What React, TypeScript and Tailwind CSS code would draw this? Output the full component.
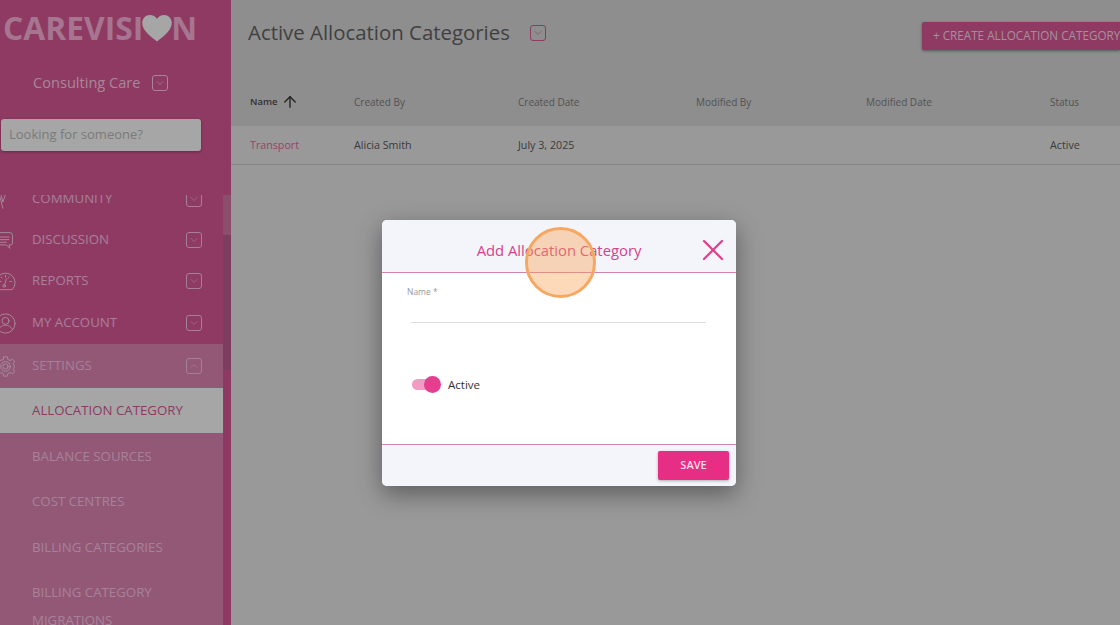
import { ArrowUp, ChevronDown, ChevronUp, X } from "lucide-react";
import type { ReactNode } from "react";

const font = "font-['Open_Sans',sans-serif]";

function ChevronBox({ up, className }: { up?: boolean; className: string }) {
  return (
    <span className={`flex size-4 shrink-0 items-center justify-center rounded-[3px] border ${className}`}>
      {up ? <ChevronUp size={12} strokeWidth={1.25} /> : <ChevronDown size={12} strokeWidth={1.25} />}
    </span>
  );
}

function NavRow({ icon, label, up, className }: { icon: ReactNode; label: string; up?: boolean; className: string }) {
  return (
    <div className={`flex items-center pr-[21px] ${className}`}>
      <span className="flex w-8 shrink-0 -translate-x-[5px] items-center text-[#ffe0f0]">{icon}</span>
      <span className="flex-1 text-[13.250px] text-[#ffc4ea]">{label}</span>
      <ChevronBox up={up} className="border-[#ffc4ea] text-[#ffc4ea]" />
    </div>
  );
}

const iconProps = {
  width: 21,
  height: 21,
  viewBox: "0 0 24 24",
  fill: "none",
  stroke: "currentColor",
  strokeWidth: 1,
  strokeLinecap: "round" as const,
  strokeLinejoin: "round" as const,
};

function CommunityIcon() {
  return (
    <svg {...iconProps}>
      <path d="M1 4h20l-9 2-3 9-2-8z" />
      <path d="M6 10l3 12" />
    </svg>
  );
}

function DiscussionIcon() {
  return (
    <svg {...iconProps}>
      <path d="M3 3h14a3 3 0 0 1 3 3v9a2 2 0 0 1-2 2h-2l1 4-4-4H3a3 3 0 0 1-3-3V6a3 3 0 0 1 3-3z" />
      <path d="M3 8h13M3 11h13M3 14h10" />
    </svg>
  );
}

function ReportsIcon() {
  return (
    <svg {...iconProps}>
      <path d="M4 21a11 11 0 1 1 16 0z" />
      <path d="M12 5v2M5 12h2M17 12h2M7 7l1 1M16 7l-1 1" />
      <path d="M13 9l-2 7" />
      <circle cx="10.5" cy="17" r="1.5" />
    </svg>
  );
}

function AccountIcon() {
  return (
    <svg {...iconProps}>
      <circle cx="12" cy="12" r="11" />
      <circle cx="12" cy="9" r="4" />
      <path d="M4 19c2-4 5-5 8-5s6 1 8 5" />
    </svg>
  );
}

function SettingsIcon() {
  return (
    <svg {...iconProps}>
      <path d="M10 1h4l.7 3 2.6 1.1L20 3.6 22.4 6l-1.5 2.7L22 11v2l-1.100 2.300 1.500 2.700L20 20.400l-2.700-1.500-2.600 1.100-.7 3h-4l-.7-3-2.600-1.100L4 20.400 1.600 18l1.500-2.700L2 13v-2l1.100-2.300L1.600 6 4 3.600l2.700 1.500L9.300 4z" />
      <circle cx="12" cy="12" r="5.500" />
      <circle cx="12" cy="12" r="3" />
    </svg>
  );
}

const subItems = ["BALANCE SOURCES", "COST CENTRES", "BILLING CATEGORIES"];

function Sidebar() {
  return (
    <aside className="flex h-full w-[231px] shrink-0 flex-col overflow-hidden bg-[#dc5998] shadow-[2px_0_6px_rgba(0,0,0,0.35)]">
      <div className="flex h-[56px] shrink-0 items-center pl-[3px] text-[31.800px] font-bold leading-none text-[#ffb4de]">
        <span>CAREVISI</span>
        <svg width="30" height="27" viewBox="0 0 24 22" className="-mx-px shrink-0 text-white">
          <path fill="currentColor" d="M12 21.500C5 16 0 12 0 6.500 0 2.800 2.800 0 6.300 0 8.600 0 10.800 1.200 12 3.200 13.200 1.200 15.400 0 17.700 0 21.200 0 24 2.800 24 6.500 24 12 19 16 12 21.500z" />
        </svg>
        <span>N</span>
      </div>

      <div className="mt-[17px] flex h-5 items-center gap-[11px] pl-[33px] text-[14.600px] text-[#ffd0ea]">
        <span>Consulting Care</span>
        <ChevronBox className="border-[#ffd0ea] text-[#ffd0ea]" />
      </div>

      <div className="ml-px mt-[26px] flex h-8 w-[200px] shrink-0 items-center rounded-[3px] bg-white pl-2 text-[13px] text-[#bdbdbd] shadow-[0_1px_3px_rgba(0,0,0,0.3)]">
        Looking for someone?
      </div>

      <div className="relative mt-[44px] min-h-0 flex-1">
        <div className="h-full w-[223px] overflow-hidden">
          <NavRow icon={<CommunityIcon />} label="COMMUNITY" className="-mt-[6px] h-[20px]" />
          <NavRow icon={<DiscussionIcon />} label="DISCUSSION" className="mt-[21px] h-[20px]" />
          <NavRow icon={<ReportsIcon />} label="REPORTS" className="mt-[21px] h-[20px]" />
          <NavRow icon={<AccountIcon />} label="MY ACCOUNT" className="mt-[22px] h-[20px]" />
          <NavRow icon={<SettingsIcon />} label="SETTINGS" up className="mt-[11px] h-[44px] bg-[#e287b5]" />
          <div className="bg-[#e287b5] pb-10">
            <div className="flex h-[45px] items-center bg-white pl-8 text-[13.250px] text-[#dc5998]">ALLOCATION CATEGORY</div>
            {subItems.map((item) => (
              <div key={item} className="flex h-[45.500px] items-center pl-8 pt-[2px] text-[13.250px] text-[#ffc8ea]">
                {item}
              </div>
            ))}
            <div className="pl-8 pt-[8px] text-[13.250px] leading-[28px] text-[#ffc8ea]">
              BILLING CATEGORY
              <br />
              MIGRATIONS
            </div>
          </div>
        </div>
        <div className="absolute right-0 top-0 h-[175px] w-2 bg-[#c05f92]">
          <div className="h-10 bg-[#d678a8]" />
        </div>
      </div>
    </aside>
  );
}

const columns = ["Created By", "Created Date", "Modified By", "Modified Date", "Status"];
const grid = "grid grid-cols-[104px_164px_178px_170px_184px_1fr] pl-[19px]";

function Main() {
  return (
    <main className="flex min-w-0 flex-1 flex-col bg-[#ebebeb]">
      <div className="h-[126px] shrink-0 overflow-hidden bg-[#dadada]">
        <div className="flex h-[80px] items-start pl-[17px]">
          <h1 className="mt-[17px] text-[20.400px] leading-[30px] text-[#646464]">Active Allocation Categories</h1>
          <ChevronBox className="ml-5 mt-[25px] border-[#dc5998] text-[#dc5998]" />
          <button className="ml-auto mt-[22px] flex h-[28px] w-[198px] shrink-0 items-center overflow-hidden whitespace-nowrap rounded-l-[2px] bg-[#dc5998] pl-[11px] text-[11.700px] text-[#ffdcf0] shadow-[0_1px_3px_rgba(0,0,0,0.4)]">
            + CREATE ALLOCATION CATEGORY
          </button>
        </div>
        <div className={`${grid} h-[44px] items-center text-[10px] font-medium text-[#808080]`}>
          <span className="flex items-center gap-[3px] text-[9.500px] font-semibold text-[#4d4d4d]">
            Name <ArrowUp size={18} strokeWidth={1.75} className="text-[#333]" />
          </span>
          {columns.map((c) => (
            <span key={c}>{c}</span>
          ))}
        </div>
      </div>
      <div className={`${grid} h-[39px] items-center border-b border-[#d0d0d0] text-[10.700px] text-[#5c5c5c]`}>
        <span className="text-[#e66ba1]">Transport</span>
        <span>Alicia Smith</span>
        <span>July 3, 2025</span>
        <span />
        <span />
        <span>Active</span>
      </div>
    </main>
  );
}

function Modal() {
  return (
    <div className="relative flex h-[266px] w-[354px] flex-col overflow-hidden rounded-[5px] bg-white shadow-[0_8px_24px_rgba(0,0,0,0.4)]">
      <div className="relative flex h-[53px] shrink-0 items-center justify-center border-b border-[#cf85b0] bg-[#f4f5fa] pt-[8px] text-[14.800px] text-[#d6418c]">
        Add Allocation Category
        <X size={36} strokeWidth={1.5} className="absolute right-[5px] top-[12px] text-[#e0408a]" />
      </div>
      <div className="flex-1 px-[25px] pt-[13px]">
        <div className="text-[8.500px] leading-3 text-[#9a9a9a]">Name *</div>
        <div className="ml-1 mt-[24px] w-[295px] border-b border-[#dddddd]" />
        <div className="ml-[5px] mt-[53px] flex items-center gap-[8px]">
          <span className="relative h-[11px] w-[27px] rounded-full bg-[#f29cc4]">
            <span className="absolute -top-[3px] right-[-2px] size-[17px] rounded-full bg-[#e63d8e]" />
          </span>
          <span className="ml-[1px] text-[11.500px] text-[#333]">Active</span>
        </div>
      </div>
      <div className="flex h-[42px] shrink-0 justify-end border-t border-[#cf85b0] bg-[#f4f5fa] pr-[7px] pt-[6px]">
        <button className="h-[29px] w-[71px] rounded-[2px] bg-[#e62e85] text-[11px] font-semibold text-[#fbdbe9] shadow-[0_1px_3px_rgba(0,0,0,0.3)]">
          SAVE
        </button>
      </div>
      <div className="pointer-events-none absolute left-[143px] top-[7px] size-[71px] rounded-full border-[3px] border-[#f6a863] bg-[#f9a050]/40" />
    </div>
  );
}

export default function App() {
  return (
    <div className={`relative flex h-[625px] w-[1120px] overflow-hidden ${font}`}>
      <Sidebar />
      <Main />
      <div className="absolute inset-0 flex items-start justify-center bg-black/35 pt-[220px]">
        <div className="-translate-x-px">
          <Modal />
        </div>
      </div>
    </div>
  );
}
